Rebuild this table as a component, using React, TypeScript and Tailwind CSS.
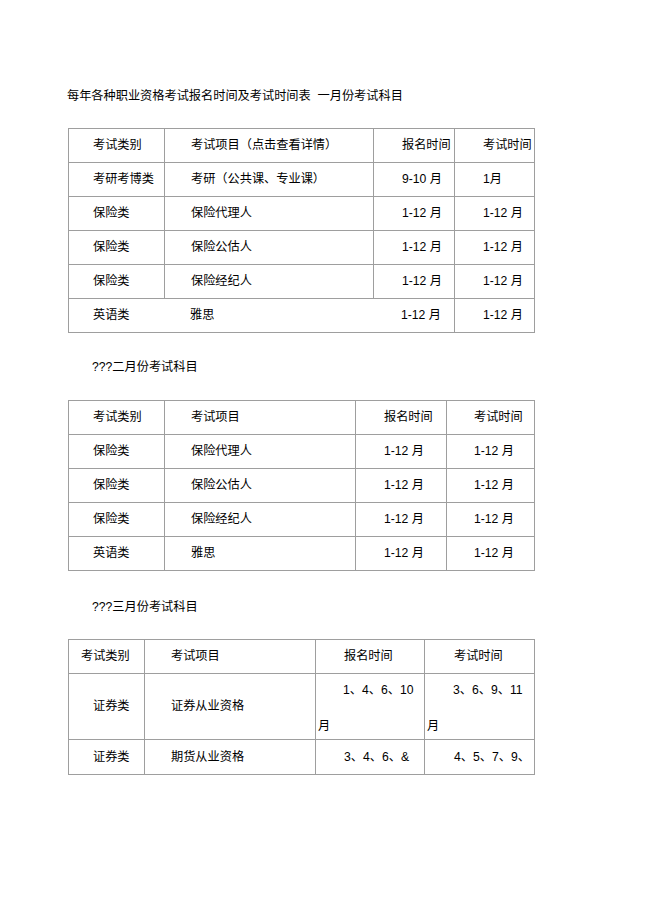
const FONT = { fontFamily: '"Liberation Sans", "Noto Sans CJK SC", sans-serif' }

type Cell = { text: React.ReactNode; pad: string; line?: boolean }
type Row = { h: string; cells: Cell[] }

function Table({ widths, rows }: { widths: string[]; rows: Row[] }) {
  return (
    <div className="w-[467px] border border-[#9e9e9e] border-b-0">
      {rows.map((row, ri) => (
        <div key={ri} className={`flex ${row.h} border-b border-[#9e9e9e]`}>
          {row.cells.map((c, ci) => (
            <div
              key={ci}
              className={`${widths[ci]} ${c.pad} flex items-center shrink-0 ${
                ci > 0 && c.line !== false ? 'border-l border-[#9e9e9e]' : ''
              }`}
            >
              {c.text}
            </div>
          ))}
        </div>
      ))}
    </div>
  )
}

const t1w = ['w-[95px]', 'w-[209px]', 'w-[81px]', 'w-[80px]']
const t2w = ['w-[95px]', 'w-[191px]', 'w-[91px]', 'w-[88px]']
const t3w = ['w-[75px]', 'w-[171px]', 'w-[109px]', 'w-[110px]']

const row1 = (a: string, b: string, c: string, d: string, lines = true): Row => ({
  h: 'h-[34px]',
  cells: [
    { text: a, pad: 'pl-[24px]' },
    { text: b, pad: 'pl-[26px]', line: lines },
    { text: c, pad: 'pl-[28px]', line: lines },
    { text: d, pad: 'pl-[28px]' },
  ],
})

const row2 = (a: string, b: string, c: string, d: string): Row => ({
  h: 'h-[34px]',
  cells: [
    { text: a, pad: 'pl-[24px]' },
    { text: b, pad: 'pl-[26px]' },
    { text: c, pad: 'pl-[28px]' },
    { text: d, pad: 'pl-[27px]' },
  ],
})

const twoLine = (first: string, padFirst: string) => (
  <div className="flex flex-col w-full self-stretch pt-[8px]">
    <div className={`${padFirst} h-[16px] leading-[16px]`}>{first}</div>
    <div className="pl-[2px] mt-[20px] h-[16px] leading-[16px]">月</div>
  </div>
)

export default function App() {
  return (
    <div className="min-h-[920px] bg-white text-[12.2px] text-black pt-[88px] pl-[68px]" style={FONT}>
      <div className="h-[16px] leading-[16px] -ml-[1px]">每年各种职业资格考试报名时间及考试时间表&nbsp;&nbsp;一月份考试科目</div>
      <div className="mt-[24px]">
        <Table
          widths={t1w}
          rows={[
            row1('考试类别', '考试项目（点击查看详情）', '报名时间', '考试时间'),
            row1('考研考博类', '考研（公共课、专业课）', '9-10 月', '1月'),
            row1('保险类', '保险代理人', '1-12 月', '1-12 月'),
            row1('保险类', '保险公估人', '1-12 月', '1-12 月'),
            row1('保险类', '保险经纪人', '1-12 月', '1-12 月'),
            row1('英语类', '雅思', '1-12 月', '1-12 月', false),
          ]}
        />
      </div>

      <div className="mt-[26px] pl-[24px] h-[16px] leading-[16px]">???二月份考试科目</div>
      <div className="mt-[25px]">
        <Table
          widths={t2w}
          rows={[
            row2('考试类别', '考试项目', '报名时间', '考试时间'),
            row2('保险类', '保险代理人', '1-12 月', '1-12 月'),
            row2('保险类', '保险公估人', '1-12 月', '1-12 月'),
            row2('保险类', '保险经纪人', '1-12 月', '1-12 月'),
            row2('英语类', '雅思', '1-12 月', '1-12 月'),
          ]}
        />
      </div>

      <div className="mt-[28px] pl-[24px] h-[16px] leading-[16px]">???三月份考试科目</div>
      <div className="mt-[24px]">
        <Table
          widths={t3w}
          rows={[
            {
              h: 'h-[34px]',
              cells: [
                { text: '考试类别', pad: 'pl-[12px]' },
                { text: '考试项目', pad: 'pl-[26px]' },
                { text: '报名时间', pad: 'pl-[28px]' },
                { text: '考试时间', pad: 'pl-[29px]' },
              ],
            },
            {
              h: 'h-[66px]',
              cells: [
                { text: '证券类', pad: 'pl-[24px]' },
                { text: '证券从业资格', pad: 'pl-[26px]' },
                { text: twoLine('1、4、6、10', 'pl-[27px]'), pad: '' },
                { text: twoLine('3、6、9、11', 'pl-[28px]'), pad: '' },
              ],
            },
            {
              h: 'h-[35px]',
              cells: [
                { text: '证券类', pad: 'pl-[24px]' },
                { text: '期货从业资格', pad: 'pl-[26px]' },
                { text: '3、4、6、&', pad: 'pl-[28px]' },
                { text: '4、5、7、9、', pad: 'pl-[29px]' },
              ],
            },
          ]}
        />
      </div>
    </div>
  )
}
